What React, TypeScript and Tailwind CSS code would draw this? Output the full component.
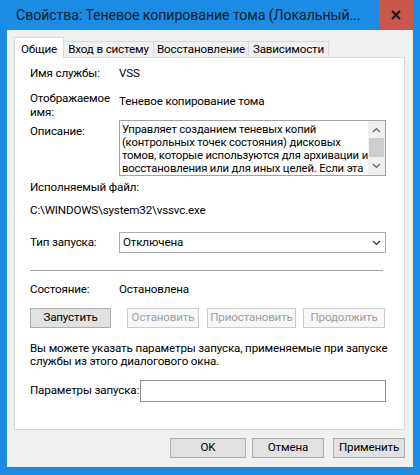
import React from "react";

function CloseIcon() {
  return (
    <svg width="10" height="10" viewBox="0 0 10 10" fill="none" stroke="#1b1b1b" strokeWidth="2">
      <path d="M1 1l8 8M9 1L1 9" />
    </svg>
  );
}

function Chevron({ up = false, color = "#606060" }: { up?: boolean; color?: string }) {
  return (
    <svg width="9" height="6" viewBox="0 0 9 6" fill="none" stroke={color} strokeWidth="1.2">
      <path d={up ? "M1 5l3.5-3.5L8 5" : "M1 1l3.5 3.5L8 1"} />
    </svg>
  );
}

const tabs = [
  { label: "Вход в систему", w: "w-[91px]" },
  { label: "Восстановление", w: "w-[96px]" },
  { label: "Зависимости", w: "w-[81px]" },
];

export default function App() {
  return (
    <div className="flex h-[475px] w-[420px] flex-col whitespace-nowrap bg-[#1b8be3] font-['Roboto',sans-serif] text-[11.6px] tracking-[-0.15px] text-black">
      {/* title bar */}
      <div className="flex h-[30px] shrink-0 items-center">
        <div className="flex-1 overflow-hidden pl-4 pt-[2px] text-[14.2px] tracking-[-0.1px] text-[#10202e]">
          Свойства: Теневое копирование тома (Локальный...
        </div>
        <div className="mr-[7px] flex h-[30px] w-[34px] items-center justify-center bg-[#c9574c]">
          <CloseIcon />
        </div>
      </div>

      {/* body */}
      <div className="mx-[7px] mb-[8px] flex flex-1 flex-col bg-[#f0f0f0] pl-[7px] pr-[8px] pt-[7px]">
        {/* tabs */}
        <div className="relative z-10 -mb-px flex h-[21px] items-end">
          <div className="flex h-[21px] w-[50px] items-start justify-center border-x border-t border-[#d9d9d9] bg-white pt-[3px]">
            Общие
          </div>
          {tabs.map((t) => (
            <div
              key={t.label}
              className={`-ml-px flex h-[17px] ${t.w} items-center justify-center border border-[#d9d9d9] bg-[#f0f0f0] leading-none`}
            >
              {t.label}
            </div>
          ))}
        </div>

        {/* panel */}
        <div className="flex h-[373px] flex-col border border-[#d9d9d9] bg-white pl-[15px] pr-[18px]">
          <div className="mt-[8px] flex h-[16px] items-center">
            <div className="w-[89px]">Имя службы:</div>
            <div>VSS</div>
          </div>

          <div className="mt-[9px] flex leading-[14px]">
            <div className="w-[89px]">
              Отображаемое
              <br />
              имя:
            </div>
            <div className="pt-[3px]">Теневое копирование тома</div>
          </div>

          <div className="mt-[1px] flex">
            <div className="w-[89px] pt-[4px] leading-[14px]">Описание:</div>
            <div className="flex h-[56px] flex-1 border border-[#a3a3a3]">
              <div className="flex-1 overflow-hidden pl-[2px] pt-[2px] text-[11.3px] leading-[13px]">
                Управляет созданием теневых копий
                <br />
                (контрольных точек состояния) дисковых
                <br />
                томов, которые используются для архивации и
                <br />
                восстановления или для иных целей. Если эта
              </div>
              <div className="flex w-[17px] flex-col bg-[#f0f0f0]">
                <div className="flex h-[17px] items-center justify-center">
                  <Chevron up />
                </div>
                <div className="mx-[1px] h-[19px] bg-[#cdcdcd]" />
                <div className="flex flex-1 items-center justify-center">
                  <Chevron />
                </div>
              </div>
            </div>
          </div>

          <div className="mt-[4px] h-[14px] leading-[14px]">Исполняемый файл:</div>
          <div className="mt-[9px] h-[14px] leading-[14px]">C:\WINDOWS\system32\vssvc.exe</div>

          <div className="mt-[15px] flex items-center">
            <div className="w-[89px]">Тип запуска:</div>
            <div className="flex h-[21px] flex-1 items-center border border-[#adadad] bg-white pl-[3px] pr-[4px]">
              <span className="flex-1">Отключена</span>
              <Chevron color="#303030" />
            </div>
          </div>

          <div className="mt-[17px] mr-[3px] h-px bg-[#a0a0a0]" />

          <div className="mt-[12px] flex h-[14px] items-center">
            <div className="w-[89px]">Состояние:</div>
            <div>Остановлена</div>
          </div>

          <div className="mt-[11px] flex h-[20px]">
            <div className="flex w-[81px] items-center justify-center border border-[#adadad] bg-[#e1e1e1]">
              Запустить
            </div>
            <div className="ml-[16px] flex w-[72px] items-center justify-center border border-[#cccccc] bg-[#f7f7f7] text-[#a0a0a0]">
              Остановить
            </div>
            <div className="ml-[8px] flex w-[89px] items-center justify-center border border-[#cccccc] bg-[#f7f7f7] text-[#a0a0a0]">
              Приостановить
            </div>
            <div className="ml-[7px] flex w-[82px] items-center justify-center border border-[#cccccc] bg-[#f7f7f7] text-[#a0a0a0]">
              Продолжить
            </div>
          </div>

          <div className="mt-[14px] leading-[13px]">
            Вы можете указать параметры запуска, применяемые при запуске
            <br />
            службы из этого диалогового окна.
          </div>

          <div className="mt-[12px] flex items-center">
            <div className="w-[110px]">Параметры запуска:</div>
            <div className="h-[22px] flex-1 border border-[#8f8f8f] bg-white" />
          </div>
        </div>

        {/* dialog buttons */}
        <div className="flex h-[37px] items-start justify-end pt-[8px]">
          <div className="flex h-[20px] w-[76px] items-center justify-center border border-[#adadad] bg-[#e1e1e1]">
            OK
          </div>
          <div className="ml-[6px] flex h-[20px] w-[72px] items-center justify-center border border-[#adadad] bg-[#e1e1e1]">
            Отмена
          </div>
          <div className="ml-[9px] flex h-[20px] w-[72px] items-center justify-center border border-[#adadad] bg-[#e1e1e1]">
            Применить
          </div>
        </div>
      </div>
    </div>
  );
}
